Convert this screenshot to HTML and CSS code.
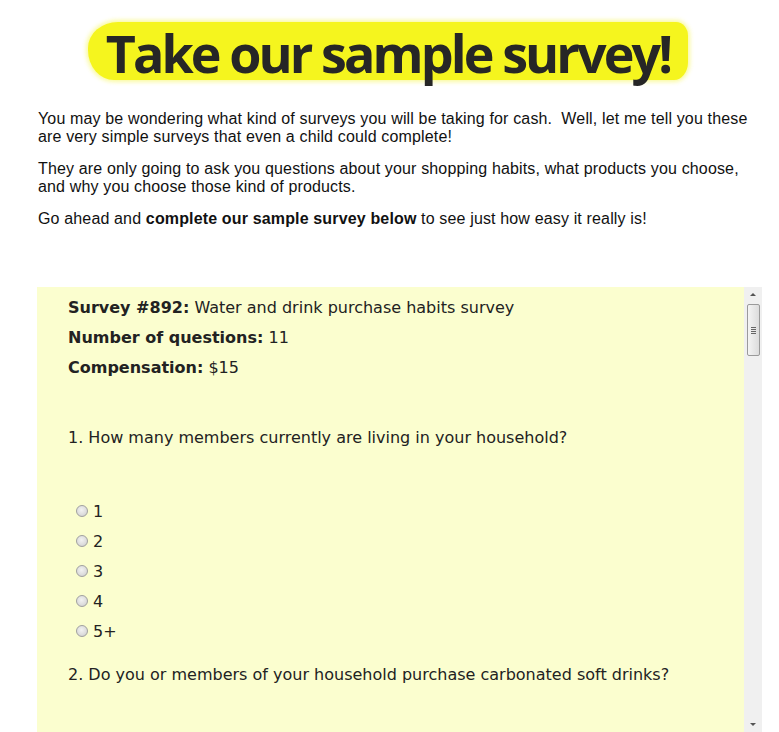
FILE: index.html
```html
<!DOCTYPE html>
<html>
<head>
<meta charset="utf-8">
<link rel="stylesheet" href="styles.css">
</head>
<body>
<div class="page">
  <div class="banner">
    <div class="highlight"><h1 class="title">Take our sample survey!</h1></div>
  </div>
  <div class="intro">
    <p>You may be wondering what kind of surveys you will be taking for cash.&nbsp; Well, let me tell you these are very simple surveys that even a child could complete!</p>
    <p>They are only going to ask you questions about your shopping habits, what products you choose, and why you choose those kind of products.</p>
    <p>Go ahead and <b>complete our sample survey below</b> to see just how easy it really is!</p>
  </div>
  <div class="frame">
    <div class="survey">
      <div class="meta"><b>Survey #892:</b> Water and drink purchase habits survey</div>
      <div class="meta"><b>Number of questions:</b> 11</div>
      <div class="meta"><b>Compensation:</b> $15</div>
      <div class="question q1">1. How many members currently are living in your household?</div>
      <div class="options">
        <label class="opt"><span class="radio"></span>1</label>
        <label class="opt"><span class="radio"></span>2</label>
        <label class="opt"><span class="radio"></span>3</label>
        <label class="opt"><span class="radio"></span>4</label>
        <label class="opt"><span class="radio"></span>5+</label>
      </div>
      <div class="question q2">2. Do you or members of your household purchase carbonated soft drinks?</div>
    </div>
    <div class="scrollbar">
      <div class="arrow up"></div>
      <div class="thumb"><span></span><span></span><span></span><span></span></div>
      <div class="track"></div>
      <div class="arrow down"></div>
    </div>
  </div>
</div>
</body>
</html>
```
FILE: styles.css
```css
html, body {
  margin: 0;
  padding: 0;
  background: #ffffff;
  overflow: hidden;
}
.page {
  width: 779px;
  height: 732px;
  display: flex;
  flex-direction: column;
}
.banner {
  display: flex;
  padding-top: 22px;
  padding-left: 88px;
}
.highlight {
  width: 600px;
  height: 58px;
  background: #f5f51e;
  border-radius: 30px 12px 14px 26px / 26px 14px 18px 30px;
  display: flex;
  align-items: center;
  justify-content: center;
  box-shadow: 0 0 4px 2px rgba(244, 244, 40, 0.45);
}
.title {
  margin: 0;
  font-family: "Open Sans", "DejaVu Sans", sans-serif;
  font-weight: 700;
  font-size: 52px;
  letter-spacing: -2.9px;
  color: #262626;
  line-height: 58px;
  padding-top: 4px;
  white-space: nowrap;
}
.intro {
  padding: 0 22px 0 38px;
  margin-top: 30px;
  font-family: "Liberation Sans", Arial, sans-serif;
  font-size: 16px;
  letter-spacing: 0.15px;
  line-height: 18px;
  color: #111;
}
.intro p {
  margin: 0 0 14px 0;
}
.intro b {
  font-weight: 700;
}
.frame {
  margin-top: 45px;
  margin-left: 37px;
  width: 725px;
  flex: 1;
  display: flex;
}
.survey {
  flex: 1;
  background: #fbfecf;
  padding: 10px 0 0 31px;
  font-family: "DejaVu Sans", Verdana, sans-serif;
  font-size: 16px;
  color: #222;
}
.meta {
  height: 30px;
  line-height: 22px;
}
.question {
  line-height: 22px;
}
.q1 {
  margin-top: 40px;
}
.options {
  margin-top: 48px;
  display: flex;
  flex-direction: column;
  padding-left: 8px;
}
.opt {
  height: 30px;
  display: flex;
  align-items: center;
  line-height: 22px;
}
.radio {
  width: 10px;
  height: 10px;
  border-radius: 50%;
  border: 1px solid #a0a0a0;
  background: radial-gradient(circle at 45% 40%, #f2f2f2 0, #dcdcdc 60%, #c8c8c8 100%);
  margin-right: 5px;
  margin-top: -2px;
}
.q2 {
  margin-top: 17px;
}
.scrollbar {
  width: 18px;
  background: #f0f0f0;
  display: flex;
  flex-direction: column;
  align-items: center;
}
.arrow {
  width: 0;
  height: 0;
  border-left: 3px solid transparent;
  border-right: 3px solid transparent;
  margin: 6px 0;
}
.arrow.up {
  border-bottom: 3px solid #555;
}
.arrow.down {
  border-top: 3px solid #555;
}
.thumb {
  width: 11px;
  height: 50px;
  margin-top: 2px;
  border: 1px solid #9a9a9a;
  border-radius: 2px;
  background: linear-gradient(to right, #f4f4f4, #dcdcdc);
  display: flex;
  flex-direction: column;
  justify-content: center;
  align-items: center;
  gap: 1px;
}
.thumb span {
  width: 5px;
  height: 1px;
  background: #666;
}
.track {
  flex: 1;
}
```
